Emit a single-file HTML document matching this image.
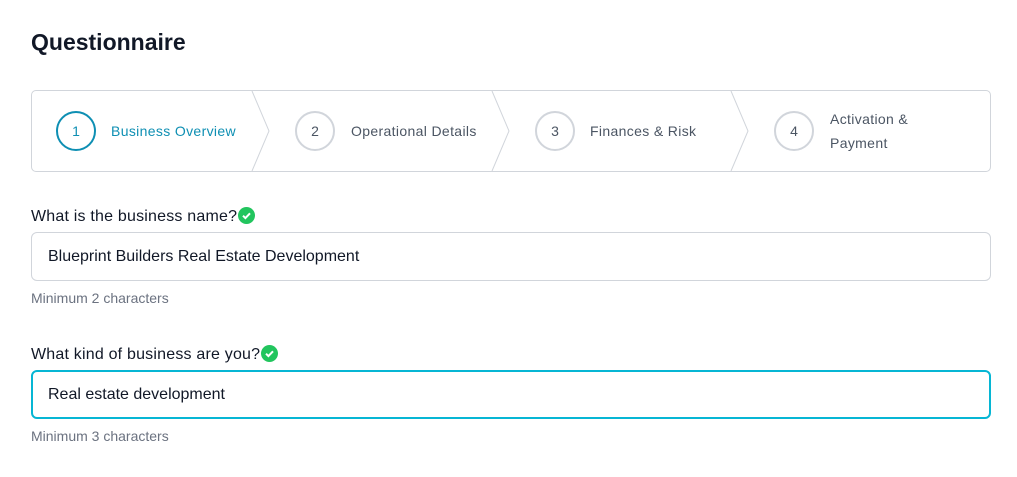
<!DOCTYPE html><html><head><style>
body{margin:0;background:#fff;font-family:"Liberation Sans",sans-serif;width:1017px;height:477px;overflow:hidden;position:relative}
.a{position:absolute}
h1{position:absolute;left:31px;top:29px;margin:0;font-size:23px;font-weight:bold;color:#111827}
.box{left:31px;top:90px;width:958px;height:80px;border:1px solid #d1d5db;border-radius:5px}
.c{width:36px;height:36px;border:2px solid #d1d5db;border-radius:50%;text-align:center;line-height:36px;font-size:14px;color:#4b5563;top:111px}
.t{font-size:14px;color:#4b5563;top:123px;letter-spacing:0.35px}
.lab{left:31px;font-size:16px;color:#111827;letter-spacing:0.2px}
.in{left:31px;width:960px;height:49px;border:1px solid #d1d5db;border-radius:6px;box-sizing:border-box}
.in span{position:absolute;left:16px;top:15px;font-size:16px;color:#111827}
.h{left:31px;font-size:14px;color:#6b7280}
.ck{display:inline-block;vertical-align:-3px;margin-left:1px}
</style></head><body>
<h1>Questionnaire</h1>
<div class="a box"></div>
<svg class="a" style="left:0;top:0" width="1017" height="477"><g fill="none" stroke="#d1d5db" stroke-width="1"><path d="M252 91 L269 131 L252 171"/><path d="M492 91 L509 131 L492 171"/><path d="M731 91 L748 131 L731 171"/></g></svg>
<div class="a c" style="left:56px;border-color:#0e8fb3;color:#0e8fb3">1</div>
<div class="a t" style="left:111px;color:#0e8fb3">Business Overview</div>
<div class="a c" style="left:295px">2</div>
<div class="a t" style="left:351px">Operational Details</div>
<div class="a c" style="left:535px">3</div>
<div class="a t" style="left:590px">Finances &amp; Risk</div>
<div class="a c" style="left:774px">4</div>
<div class="a t" style="left:830px;top:107px;line-height:24px">Activation &amp;<br>Payment</div>
<div class="a lab" style="top:207px">What is the business name?<svg class="ck" width="17" height="17" viewBox="0 0 17 17"><circle cx="8.5" cy="8.5" r="8.5" fill="#22c55e"/><path d="M5 8.7l2.4 2.4 4.6-4.8" stroke="#fff" stroke-width="2" fill="none"/></svg></div>
<div class="a in" style="top:232px"><span>Blueprint Builders Real Estate Development</span></div>
<div class="a h" style="top:290px">Minimum 2 characters</div>
<div class="a lab" style="top:345px">What kind of business are you?<svg class="ck" width="17" height="17" viewBox="0 0 17 17"><circle cx="8.5" cy="8.5" r="8.5" fill="#22c55e"/><path d="M5 8.7l2.4 2.4 4.6-4.8" stroke="#fff" stroke-width="2" fill="none"/></svg></div>
<div class="a in" style="top:370px;border:2px solid #06b6d4"><span style="left:15px;top:14px">Real estate development</span></div>
<div class="a h" style="top:428px">Minimum 3 characters</div>
</body></html>
